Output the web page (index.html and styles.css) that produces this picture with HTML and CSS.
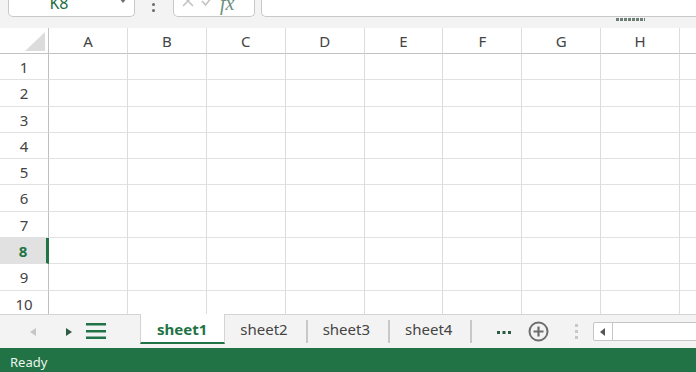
FILE: index.html
```html
<!DOCTYPE html>
<html lang="en">
<head>
  <meta charset="UTF-8" />
  <meta name="viewport" content="width=device-width, initial-scale=1.0"/>
  <title>Sheet</title>
  <link rel="stylesheet" href="styles.css">
</head>
<body>
  <div class="toolbar">
    <div class="toolbar-main">
      <div class="name-box">
        <span class="name-text">K8</span>
        <span class="caret"></span>
      </div>
      <div class="more-dots"><i></i><i></i></div>
      <div class="fx-box">
        <svg class="fx-icon fx-cancel" width="12" height="12" viewBox="0 0 12 12"><path d="M1 1 L11 11 M11 1 L1 11" stroke="#c4c4c4" stroke-width="1.6" fill="none"/></svg>
        <svg class="fx-icon fx-ok" width="12" height="11" viewBox="0 0 12 11"><path d="M1 5 L4.5 9 L11 1" stroke="#c4c4c4" stroke-width="1.6" fill="none"/></svg>
        <span class="fx-label">fx</span>
      </div>
      <div class="formula-input"></div>
    </div>
    <div class="toolbar-grip"><span class="grip"></span></div>
  </div>

  <div class="grid" id="grid"></div>

  <div class="tabbar">
    <span class="nav-prev"></span>
    <span class="nav-next"></span>
    <svg class="menu" width="20" height="17" viewBox="0 0 20 17">
      <rect x="0" y="0" width="20" height="2.5" fill="#217346"/>
      <rect x="0" y="7" width="20" height="2.5" fill="#217346"/>
      <rect x="0" y="13.5" width="20" height="2.5" fill="#217346"/>
    </svg>
    <div class="tab active">sheet1</div>
    <div class="tab">sheet2</div>
    <span class="tab-sep"></span>
    <div class="tab">sheet3</div>
    <span class="tab-sep"></span>
    <div class="tab">sheet4</div>
    <span class="tab-sep"></span>
    <svg class="more-sheets" width="14" height="3" viewBox="0 0 14 3">
      <rect x="0" y="0" width="3" height="3" fill="#2e5b45"/>
      <rect x="5.5" y="0" width="3" height="3" fill="#2e5b45"/>
      <rect x="11" y="0" width="3" height="3" fill="#2e5b45"/>
    </svg>
    <svg class="add-sheet" width="21" height="21" viewBox="0 0 21 21">
      <circle cx="10.5" cy="10.5" r="9" stroke="#6e6e6e" stroke-width="2" fill="none"/>
      <path d="M10.5 5.5 V15.5 M5.5 10.5 H15.5" stroke="#6e6e6e" stroke-width="2.2"/>
    </svg>
    <svg class="split" width="3" height="15" viewBox="0 0 3 15">
      <rect x="0" y="0" width="3" height="3" fill="#c8c8c8"/>
      <rect x="0" y="6" width="3" height="3" fill="#c8c8c8"/>
      <rect x="0" y="12" width="3" height="3" fill="#c8c8c8"/>
    </svg>
    <div class="hscroll">
      <span class="hscroll-btn"><i></i></span>
    </div>
  </div>

  <div class="statusbar">Ready</div>

  <script>
    const grid = document.getElementById("grid");
    const cols = "ABCDEFGHI".split("");
    let html = '<div class="cell corner"><svg width="20" height="19" viewBox="0 0 20 19"><polygon points="20,0 20,19 0,19" fill="#dcdcdc"/></svg></div>';
    cols.forEach(c => html += `<div class="cell col-head">${c}</div>`);
    for (let r = 1; r <= 10; r++) {
      html += `<div class="cell row-head${r === 8 ? ' active' : ''}">${r}</div>`;
      cols.forEach(() => html += '<div class="cell"></div>');
    }
    grid.innerHTML = html;
  </script>
</body>
</html>
```

FILE: styles.css
```css
body {
  margin: 0;
  width: 696px;
  height: 372px;
  overflow: hidden;
  background: #fff;
  font-family: "Noto Sans", "Open Sans", sans-serif;
  display: flex;
  flex-direction: column;
}
.toolbar {
  height: 28px;
  flex: none;
  background: #f3f3f3;
}
.toolbar-main {
  height: 17px;
  display: flex;
  align-items: flex-end;
}
.name-box {
  margin-left: 8px;
  width: 127px;
  height: 26px;
  box-sizing: border-box;
  border: 1px solid #c8c8c8;
  border-top: none;
  border-radius: 0 0 5px 5px;
  background: #fff;
  display: flex;
  align-items: flex-end;
  padding-bottom: 5px;
  flex: none;
}
.name-text {
  flex: 1;
  text-align: center;
  padding-right: 10px;
  font-size: 16px;
  line-height: 16px;
  color: #1e6e42;
}
.caret {
  align-self: flex-start;
  margin-top: 7px;
  margin-right: 7px;
  width: 0;
  height: 0;
  border-left: 4px solid transparent;
  border-right: 4px solid transparent;
  border-top: 5px solid #707070;
}
.more-dots {
  align-self: flex-start;
  margin: 3px 0 0 17px;
  display: flex;
  flex-direction: column;
  gap: 3px;
}
.more-dots i {
  display: block;
  width: 3px;
  height: 3px;
  border-radius: 50%;
  background: #6a6a6a;
}
.fx-box {
  margin-left: 18px;
  width: 82px;
  height: 24px;
  box-sizing: border-box;
  border: 1px solid #c8c8c8;
  border-top: none;
  border-radius: 0 0 5px 5px;
  background: #fff;
  display: flex;
  align-items: flex-end;
  padding-bottom: 9px;
  flex: none;
}
.fx-cancel {
  margin-left: 8px;
}
.fx-ok {
  margin-left: 7px;
}
.fx-label {
  margin-left: 7px;
  margin-bottom: -6px;
  font-family: "Liberation Serif", serif;
  font-style: italic;
  font-size: 20px;
  line-height: 20px;
  color: #6a9080;
}
.formula-input {
  margin-left: 6px;
  flex: 1;
  height: 24px;
  box-sizing: border-box;
  border-left: 1px solid #c8c8c8;
  border-bottom: 1px solid #c8c8c8;
  border-radius: 0 0 0 5px;
  background: #fff;
}
.toolbar-grip {
  height: 11px;
  display: flex;
}
.grip {
  margin: 1px 0 0 616px;
  width: 29px;
  height: 3px;
  background: repeating-linear-gradient(90deg, #6d7f74 0 3px, transparent 3px 4px);
}

.grid {
  height: 286px;
  flex: none;
  overflow: hidden;
  display: grid;
  grid-template-columns: 49px repeat(9, 78.9px);
  grid-template-rows: 26px repeat(10, 26.3px);
}
.cell {
  box-sizing: border-box;
  border-right: 1px solid #dcdcdc;
  border-bottom: 1px solid #e1e1e1;
}
.corner {
  border-right-color: #c2c2c2;
  border-bottom-color: #c2c2c2;
  display: flex;
  justify-content: flex-end;
  align-items: flex-end;
  padding: 0 3px 2px 0;
}
.corner svg {
  display: block;
}
.col-head {
  text-align: center;
  font-size: 15px;
  line-height: 24px;
  padding-top: 1px;
  color: #444;
  border-bottom-color: #c2c2c2;
}
.row-head {
  text-align: center;
  font-size: 15px;
  line-height: 24px;
  padding-top: 1px;
  color: #444;
  border-right-color: #bfbfbf;
}
.row-head.active {
  background: #e1e1e1;
  color: #217346;
  font-weight: 700;
  border-right: 3px solid #217346;
}

.tabbar {
  height: 34px;
  flex: none;
  box-sizing: border-box;
  border-top: 1px solid #d4d4d4;
  background: #f3f3f3;
  display: flex;
  align-items: center;
}
.tabbar > * {
  flex: none;
}
.nav-prev {
  margin-left: 30px;
  width: 0;
  height: 0;
  border-top: 4.5px solid transparent;
  border-bottom: 4.5px solid transparent;
  border-right: 6px solid #c6c6c6;
}
.nav-next {
  margin-left: 30px;
  width: 0;
  height: 0;
  border-top: 4.5px solid transparent;
  border-bottom: 4.5px solid transparent;
  border-left: 6px solid #2e5b45;
}
.menu {
  margin-left: 14px;
  display: block;
}
.tab {
  align-self: flex-start;
  height: 30px;
  margin-top: -1px;
  box-sizing: border-box;
  padding: 2px 18px 0 15px;
  font-size: 15px;
  line-height: 26px;
  color: #444;
  border-bottom: 2px solid transparent;
}
.tab.active {
  margin-left: 34px;
  padding: 2px 17px 0 16px;
  background: #fff;
  color: #217346;
  font-weight: 700;
  border-left: 1px solid #d4d4d4;
  border-right: 1px solid #d4d4d4;
  border-bottom-color: #217346;
}
.tab-sep {
  align-self: flex-start;
  margin-top: 5px;
  width: 2px;
  height: 23px;
  background: #c8c8c8;
}
.more-sheets {
  margin: 2px 0 0 25px;
  display: block;
}
.add-sheet {
  margin-left: 17px;
  display: block;
}
.split {
  margin-left: 26px;
  display: block;
}
.hscroll {
  margin-left: 15px;
  width: 120px;
  height: 19px;
  box-sizing: border-box;
  border: 1px solid #c6c6c6;
  border-radius: 2px 0 0 2px;
  background: #fff;
  display: flex;
}
.hscroll-btn {
  width: 19px;
  border-right: 1px solid #c6c6c6;
  display: flex;
  align-items: center;
  padding-left: 6px;
  box-sizing: border-box;
}
.hscroll-btn i {
  width: 0;
  height: 0;
  border-top: 4px solid transparent;
  border-bottom: 4px solid transparent;
  border-right: 5px solid #555;
}

.statusbar {
  height: 24px;
  flex: none;
  box-sizing: border-box;
  padding: 4px 0 0 10px;
  background: #217346;
  color: #eef5f0;
  font-size: 13px;
  line-height: 20px;
}
```
